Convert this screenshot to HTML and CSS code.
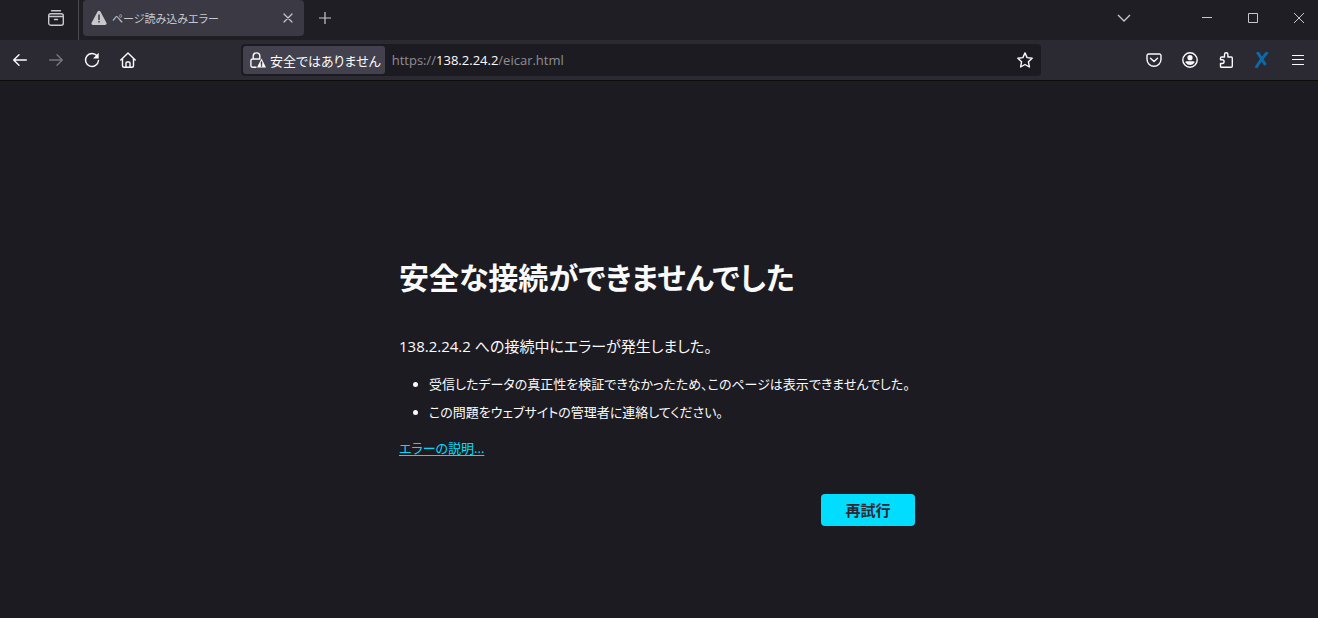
FILE: index.html
```html
<!DOCTYPE html>
<html lang="ja">
<head>
<meta charset="utf-8">
<meta name="viewport" content="width=device-width, initial-scale=1">
<title>ページ読み込みエラー</title>
<link rel="stylesheet" href="styles.css">
</head>
<body>
<header class="browser">
  <div class="tabbar">
    <button class="recent" type="button" aria-label="最近の表示">
      <svg width="16" height="16" viewBox="0 0 16 16"><path d="M3.500 .7h9" /><rect x=".7" y="3.700" width="14.6" height="11.500" rx="2"/><path d="M1 6.500h14M6.500 9.500h3"/></svg>
    </button>
    <div class="tab">
      <svg class="warning" width="16" height="16" viewBox="0 0 16 16"><path fill="currentColor" stroke="none" d="M6.6 1.5a1.6 1.6 0 0 1 2.8 0l6 11.2A1.6 1.6 0 0 1 14 15H2a1.6 1.6 0 0 1-1.400-2.300z"/><path class="mark" d="M8 5v4.500M8 11.500v.5"/></svg>
      <span class="tab-title">ページ読み込みエラー</span>
      <button class="tab-close" type="button" aria-label="タブを閉じる">
        <svg width="10" height="10" viewBox="0 0 10 10"><path d="M1 1l8 8M9 1l-8 8"/></svg>
      </button>
    </div>
    <button class="new-tab" type="button" aria-label="新しいタブ">
      <svg width="12" height="12" viewBox="0 0 12 12"><path d="M6 0v12M0 6h12"/></svg>
    </button>
    <div class="window-controls">
      <button class="list-tabs" type="button" aria-label="タブの一覧"><svg width="14" height="8" viewBox="0 0 14 8"><path d="M1 1l6 6 6-6"/></svg></button>
      <button type="button" aria-label="最小化"><svg width="10" height="10" viewBox="0 0 10 10"><path d="M0 4.500h10"/></svg></button>
      <button type="button" aria-label="最大化"><svg width="10" height="10" viewBox="0 0 10 10"><path d="M.5.5h9v9h-9z"/></svg></button>
      <button type="button" aria-label="閉じる"><svg width="10" height="10" viewBox="0 0 10 10"><path d="M0 0l10 10M10 0L0 10"/></svg></button>
    </div>
  </div>
  <div class="toolbar">
    <nav class="nav-buttons">
      <button type="button" aria-label="戻る"><svg width="16" height="16" viewBox="0 0 16 16"><path d="M14.300 8H2M7 2.700L1.700 8 7 13.300"/></svg></button>
      <button type="button" aria-label="進む" disabled><svg width="16" height="16" viewBox="0 0 16 16"><path d="M1.700 8H14M9 2.700L14.300 8 9 13.300"/></svg></button>
      <button type="button" aria-label="再読み込み"><svg width="16" height="16" viewBox="0 0 16 16"><path d="M13 3.800A6.500 6.500 0 1 0 14.500 8.500"/><path fill="currentColor" stroke="none" d="M14.700.8v5.700H9z"/></svg></button>
      <button type="button" aria-label="ホーム"><svg width="16" height="16" viewBox="0 0 16 16"><path d="M.8 8L8 1l7.200 7M2.500 6.500v7.200a1.500 1.500 0 0 0 1.500 1.500h8a1.500 1.500 0 0 0 1.500-1.500V6.500"/><path d="M6 15v-4a1 1 0 0 1 1-1h2a1 1 0 0 1 1 1v4"/></svg></button>
    </nav>
    <div class="urlbar">
      <button class="identity" type="button">
        <svg width="16" height="16" viewBox="0 0 16 16"><path d="M3.200 7V4.200a3.300 3.300 0 0 1 6.600 0V7M6 15.200H2.700a1.800 1.800 0 0 1-1.800-1.800V8.800A1.800 1.800 0 0 1 2.700 7H9.500"/><path fill="currentColor" stroke="none" d="M11.500 6.500L16 15.500H7z"/><path class="mark" d="M11.500 10v2.200M11.500 13.800v.2"/></svg>
        <span>安全ではありません</span>
      </button>
      <div class="address">
        <input id="address" class="address-input" type="text" autocomplete="off">
        <label class="address-text" for="address">https://<b>138.2.24.2</b>/eicar.html</label>
      </div>
      <button class="bookmark" type="button" aria-label="ブックマーク"><svg width="16" height="16" viewBox="0 0 16 16"><path d="M8 .9l2.100 4.700 5.100.6-3.800 3.500 1 5.300L8 12.500 3.600 15l1-5.300L.8 6.200l5.100-.6z"/></svg></button>
    </div>
    <div class="tools">
      <button type="button" aria-label="Pocket に保存"><svg width="16" height="16" viewBox="0 0 16 16"><path d="M2.700 2h10.600a1.700 1.700 0 0 1 1.700 1.700v3.600a7 7 0 0 1-14 0V3.700A1.700 1.700 0 0 1 2.700 2z"/><path d="M4.500 6.200L8 9.500l3.500-3.300"/></svg></button>
      <button type="button" aria-label="アカウント"><svg width="16" height="16" viewBox="0 0 16 16"><circle cx="8" cy="8" r="7.200"/><circle cx="8" cy="5.700" r="2.600" fill="currentColor" stroke="none"/><path fill="currentColor" stroke="none" d="M4.500 9.300h7a1 1 0 0 1 .8 1.500 5.200 5.200 0 0 1-8.600 0 1 1 0 0 1 .8-1.500z"/></svg></button>
      <button type="button" aria-label="拡張機能"><svg width="16" height="16" viewBox="0 0 16 16"><path d="M2.500 7.500V6a1 1 0 0 1 1-1h3V2.500a1.700 1.700 0 0 1 3.400 0V5h3.400a1 1 0 0 1 1 1v8.200a1 1 0 0 1-1 1H3.500a1 1 0 0 1-1-1v-2.700h1.700a1.900 1.900 0 0 0 0-3.800H2.500"/></svg></button>
      <button class="extension" type="button" aria-label="拡張機能 X"><svg width="16" height="16" viewBox="0 0 16 16"><path d="M3.300 0l8.200 13M13.500 0C10 4.500 5 10 2 16"/></svg></button>
      <button type="button" aria-label="メニュー"><svg class="menu" width="16" height="16" viewBox="0 0 16 16"><path d="M2.500 3.500h11M2.500 7.500h11M2.500 12.500h11"/></svg></button>
    </div>
  </div>
</header>
<main class="page">
  <section class="error">
    <h1>安全な接続ができませんでした</h1>
    <p class="summary">138.2.24.2 への接続中にエラーが発生しました。</p>
    <ul class="reasons">
      <li>受信したデータの真正性を検証できなかったため、このページは表示できませんでした。</li>
      <li>この問題をウェブサイトの管理者に連絡してください。</li>
    </ul>
    <a class="details" href="#">エラーの説明...</a>
    <div class="actions"><button class="retry" type="button">再試行</button></div>
  </section>
</main>
</body>
</html>
```

FILE: styles.css
```css
* { box-sizing: border-box; }

body {
  margin: 0;
  min-height: 100vh;
  display: flex;
  flex-direction: column;
  background: #1c1b22;
  color: #fbfbfe;
  font-family: "Open Sans", "Noto Sans CJK JP", sans-serif;
  font-size: 13px;
  font-feature-settings: "palt";
}

button {
  display: flex;
  align-items: center;
  justify-content: center;
  padding: 0;
  border: 0;
  background: none;
  color: inherit;
  font: inherit;
  font-feature-settings: inherit;
}

svg {
  flex: none;
  fill: none;
  stroke: currentColor;
  stroke-width: 1.4;
  stroke-linecap: round;
  stroke-linejoin: round;
}

.tabbar {
  display: flex;
  height: 40px;
  background: #1f1e25;
  color: #c8c8cc;
}

.tabbar svg { stroke-width: 1.2; }

.recent {
  width: 79px;
  padding: 0 15px 4px 48px;
  border-right: 1px solid #4b4a52;
}

.recent svg { stroke-width: 1.4; }

.tab {
  display: flex;
  align-items: center;
  gap: 5px;
  width: 221px;
  height: 36px;
  margin-left: 4px;
  padding: 0 6px 0 8px;
  border-radius: 4px;
  background: #3a3944;
}

.tab .mark, .identity .mark {
  stroke: #3a3944;
  stroke-width: 1.5;
}

.tab-title {
  flex: 1;
  font-size: 11px;
  white-space: nowrap;
}

.tab-close { width: 20px; height: 20px; }

.new-tab { width: 42px; height: 36px; }

.window-controls {
  display: flex;
  height: 36px;
  margin-left: auto;
}

.window-controls button { width: 46px; }

.window-controls svg {
  stroke-width: 1;
  stroke-linecap: butt;
}

.window-controls .list-tabs { margin-right: 37px; }

.window-controls .list-tabs svg { stroke-width: 1.4; }

.window-controls button:last-child {
  width: 42px;
  padding-left: 4px;
}

.toolbar {
  display: flex;
  align-items: center;
  height: 41px;
  border-bottom: 1px solid #0c0c0d;
  background: #2b2a33;
}

.nav-buttons, .tools { display: flex; }

.nav-buttons { padding-left: 2px; }

.nav-buttons button, .tools button {
  width: 36px;
  height: 32px;
}

.nav-buttons button:disabled { color: #77767d; }

.urlbar {
  display: flex;
  align-items: center;
  flex: 1;
  height: 32px;
  margin: 0 95px;
  padding: 0 8px 0 2px;
  border-radius: 4px;
  background: #1c1b22;
}

.identity {
  gap: 4px;
  height: 28px;
  padding: 0 4px 0 7px;
  border-radius: 3px;
  background: #42414d;
  white-space: nowrap;
}

.address {
  display: grid;
  flex: 1;
  align-items: center;
  margin-left: 7px;
}

.address-input, .address-text { grid-area: 1 / 1; }

.address-input {
  width: 100%;
  height: 28px;
  padding: 0;
  border: 0;
  outline: 0;
  background: none;
  color: #fbfbfe;
  font: inherit;
}

.address-text { color: #8f8e95; }

.address-text b {
  color: #fbfbfe;
  font-weight: 400;
}

.tools { padding-right: 2px; }

.extension svg {
  color: #0d6aa8;
  stroke-width: 3;
  stroke-linecap: butt;
}

.menu { stroke-width: 1.2; }

.page {
  display: flex;
  flex: 1;
  align-items: center;
  justify-content: center;
  padding: 84px 16px 0;
}

.error { width: 520px; }

h1 {
  margin: 0 0 36px;
  font-size: 30px;
  font-weight: 700;
  line-height: 40px;
}

.summary {
  margin: 0 0 16px;
  font-size: 15px;
  line-height: 24px;
}

.reasons {
  margin: 0;
  padding-left: 30px;
  line-height: 20px;
}

.reasons li { margin-bottom: 8px; }

.details {
  display: block;
  width: fit-content;
  margin-top: 16px;
  color: #00ddff;
  line-height: 20px;
  text-underline-offset: 2px;
}

.actions {
  display: flex;
  justify-content: flex-end;
  margin-top: 36px;
  padding-right: 4px;
}

.retry {
  min-width: 94px;
  height: 32px;
  border-radius: 4px;
  background: #00ddff;
  color: #2b2a33;
  font-size: 15px;
  font-weight: 700;
}
```
